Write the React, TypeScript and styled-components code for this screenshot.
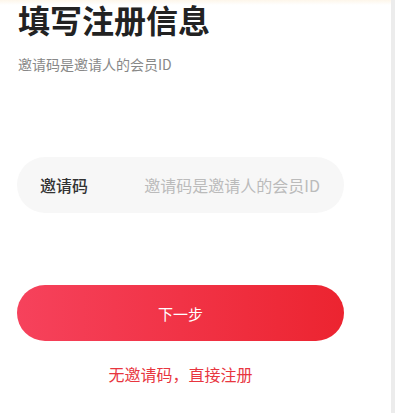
import React from 'react';
import styled, { createGlobalStyle } from 'styled-components';

const GlobalStyle = createGlobalStyle`
  * {
    box-sizing: border-box;
  }
  html, body {
    margin: 0;
    padding: 0;
    background: #fff;
    font-family: "Noto Sans CJK SC", "Noto Sans", sans-serif;
  }
`;

const Register = () => {
  return (
    <Page>
      <GlobalStyle />
      <Main>
        <Title>填写注册信息</Title>
        <SubTitle>邀请码是邀请人的会员ID</SubTitle>
        <Field>
          <Label>邀请码</Label>
          <Input placeholder="邀请码是邀请人的会员ID" />
        </Field>
        <NextButton>下一步</NextButton>
        <SkipLink>无邀请码，直接注册</SkipLink>
      </Main>
      <ScrollTrack />
    </Page>
  );
};

export default Register;

const Page = styled.div`
  display: flex;
  height: 100vh;
  background: linear-gradient(to bottom, #fdf6ea 0, #ffffff 5px);
`;

const Main = styled.div`
  flex: 1;
  display: flex;
  flex-direction: column;
  padding: 0 47px 0 17px;
`;

const ScrollTrack = styled.div`
  width: 4px;
  background-color: #ececec;
`;

const Title = styled.h1`
  margin: 0 0 0 1px;
  font-size: 32px;
  line-height: 38px;
  font-weight: 700;
  color: #222;
`;

const SubTitle = styled.p`
  margin: 17px 0 0 1px;
  font-size: 14px;
  line-height: 18px;
  color: #888;
`;

const Field = styled.label`
  display: flex;
  align-items: center;
  height: 56px;
  margin-top: 84px;
  padding: 0 22px 0 23px;
  border-radius: 28px;
  background-color: #f7f7f7;
`;

const Label = styled.span`
  width: 100px;
  flex-shrink: 0;
  font-size: 16px;
  font-weight: 500;
  color: #333;
`;

const Input = styled.input`
  flex: 1;
  min-width: 0;
  border: none;
  outline: none;
  background: transparent;
  font-family: inherit;
  font-size: 16px;
  color: #333;
  text-align: right;
  &::placeholder {
    color: #bbb;
  }
`;

const NextButton = styled.button`
  height: 56px;
  margin-top: 72px;
  border: none;
  border-radius: 28px;
  background: linear-gradient(to right, #f6425c, #ec2430);
  color: #fff;
  font-family: inherit;
  font-size: 15px;
  cursor: pointer;
`;

const SkipLink = styled.a`
  margin-top: 21px;
  text-align: center;
  font-size: 16px;
  line-height: 24px;
  color: #e8363f;
  cursor: pointer;
`;
